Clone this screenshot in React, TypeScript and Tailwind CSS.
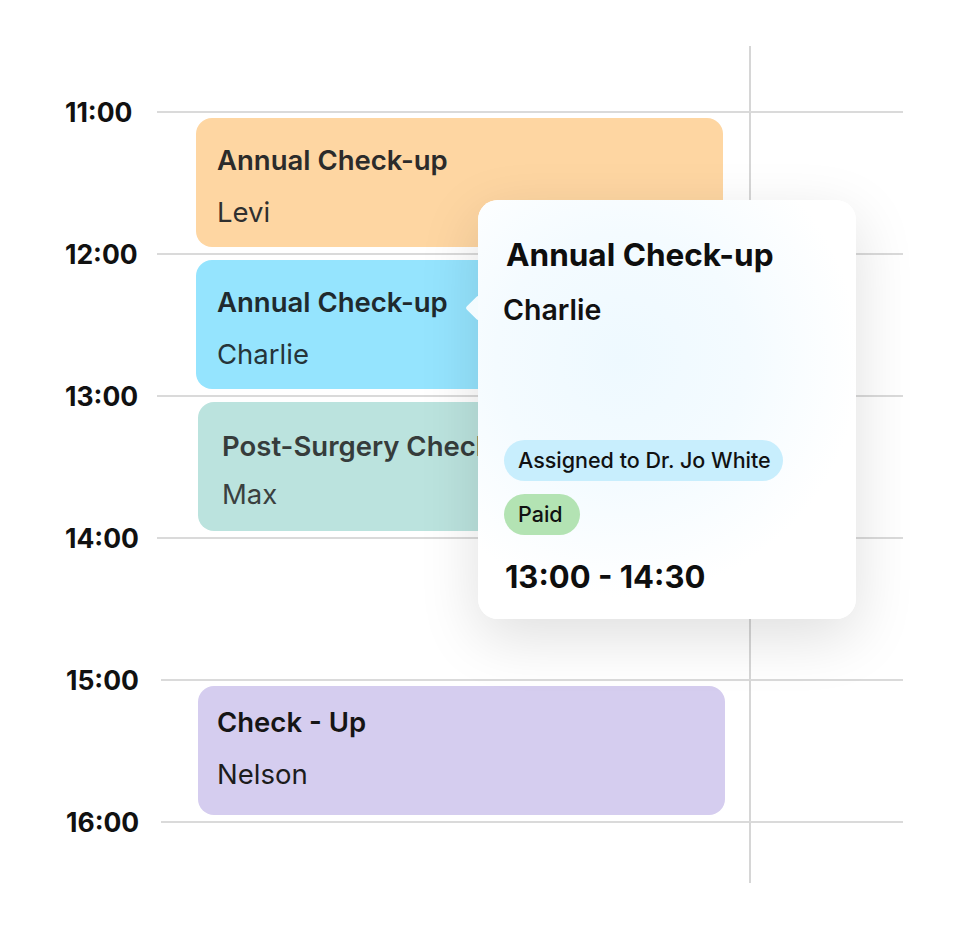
type Appt = {
  title: string
  name: string
  bg: string
  titleColor: string
  nameColor: string
  inset: string
  pad: string
  gap: string
}

const slots: { hour: string; appt?: Appt; shift?: boolean }[] = [
  {
    hour: '11:00',
    appt: {
      title: 'Annual Check-up',
      name: 'Levi',
      bg: 'bg-[#fed6a2]',
      titleColor: 'text-[#2b2b2b]',
      nameColor: 'text-[#2f2f2f]',
      inset: 'ml-[39px] pl-[21px]',
      pad: 'pt-[26px]',
      gap: 'mt-[20px]'
    }
  },
  {
    hour: '12:00',
    appt: {
      title: 'Annual Check-up',
      name: 'Charlie',
      bg: 'bg-[#95e4fe]',
      titleColor: 'text-[#1f2a2e]',
      nameColor: 'text-[#26343a]',
      inset: 'ml-[39px] pl-[21px]',
      pad: 'pt-[26px]',
      gap: 'mt-[20px]'
    }
  },
  {
    hour: '13:00',
    appt: {
      title: 'Post-Surgery Check',
      name: 'Max',
      bg: 'bg-[#bbe3de]',
      titleColor: 'text-[#363c3b]',
      nameColor: 'text-[#3a403f]',
      inset: 'ml-[41px] pl-[24px]',
      pad: 'pt-[28px]',
      gap: 'mt-[16px]'
    }
  },
  { hour: '14:00' },
  {
    hour: '15:00',
    shift: true,
    appt: {
      title: 'Check - Up',
      name: 'Nelson',
      bg: 'bg-[#d5cdef]',
      titleColor: 'text-[#151515]',
      nameColor: 'text-[#1c1c1c]',
      inset: 'ml-[37px] pl-[19px]',
      pad: 'pt-[20px]',
      gap: 'mt-[20px]'
    }
  }
]

function HourLabel({ hour, shift }: { hour: string; shift?: boolean }) {
  return (
    <div className={`h-0 ${shift ? 'pl-[66px]' : 'pl-[65px]'}`}>
      <div className="mt-[1px] -translate-y-1/2 text-[26.5px] leading-[32px] font-bold text-[#111111]">
        {hour}
      </div>
    </div>
  )
}

function Slot({ hour, appt, shift }: { hour: string; appt?: Appt; shift?: boolean }) {
  return (
    <div className="grid grid-cols-[157px_592px_154px] h-[142px]">
      <HourLabel hour={hour} shift={shift} />
      <div className={`border-t-2 border-[#dadada] pt-[5px] ${shift ? 'ml-[4px]' : ''}`}>
        {appt && (
          <div
            className={`${appt.bg} ${appt.inset} ${appt.pad} w-[527px] h-[129px] rounded-[16px] overflow-hidden whitespace-nowrap`}
          >
            <div className={`text-[27.5px] leading-[32px] font-semibold ${appt.titleColor}`}>
              {appt.title}
            </div>
            <div className={`${appt.gap} text-[27.5px] leading-[32px] font-normal ${appt.nameColor}`}>
              {appt.name}
            </div>
          </div>
        )}
      </div>
      <div className="border-t-2 border-l-2 border-[#dadada] border-l-[#d6d6d6]" />
    </div>
  )
}

function Popover() {
  return (
    <div className="absolute left-[478px] top-[200px] w-[378px] h-[419px] rounded-[20px] bg-white shadow-[0_18px_60px_rgba(0,0,0,0.13)]">
      {/* arrow */}
      <div className="absolute left-[-9px] top-[99px] w-[18px] h-[18px] rotate-45 rounded-[2px] bg-[#f3fbfe]" />
      <div className="relative h-full rounded-[20px] bg-[radial-gradient(circle_at_38%_38%,#eef9ff_0%,#f4fbff_36%,#ffffff_68%)] pt-[37px] pl-[28px] pr-[16px]">
        <div className="text-[31.5px] leading-[36px] font-bold text-[#0e0e0e] whitespace-nowrap">
          Annual Check-up
        </div>
        <div className="mt-[20px] -ml-[3px] text-[28.5px] leading-[34px] font-semibold text-[#111111]">
          Charlie
        </div>
        <div className="mt-[113px] -ml-[2px] flex flex-col items-start gap-[13px]">
          <span className="h-[41px] pl-[14px] pr-[12px] rounded-full bg-[#c8eefd] text-[21.5px] leading-[41px] font-medium text-[#111111] whitespace-nowrap">
            Assigned to Dr. Jo White
          </span>
          <span className="h-[41px] pl-[14px] pr-[17px] rounded-full bg-[#b3e3b3] text-[21.5px] leading-[41px] font-medium text-[#111111]">
            Paid
          </span>
        </div>
        <div className="mt-[24px] -ml-[1px] text-[31px] leading-[36px] font-bold text-[#0e0e0e]">
          13:00 - 14:30
        </div>
      </div>
    </div>
  )
}

export default function App() {
  return (
    <div className="relative w-[964px] h-[948px] bg-white font-['Inter',sans-serif] pt-[46px]">
      {/* space above the first hour line */}
      <div className="grid grid-cols-[157px_592px_154px] h-[65px]">
        <div />
        <div />
        <div className="border-l-2 border-[#d6d6d6]" />
      </div>

      {slots.map((s) => (
        <Slot key={s.hour} hour={s.hour} appt={s.appt} shift={s.shift} />
      ))}

      {/* last line + tail of the vertical divider */}
      <div className="grid grid-cols-[157px_592px_154px] h-[62px]">
        <HourLabel hour="16:00" shift />
        <div className="border-t-2 border-[#dadada] ml-[4px]" />
        <div className="border-t-2 border-l-2 border-[#dadada] border-l-[#d6d6d6]" />
      </div>

      <Popover />
    </div>
  )
}
